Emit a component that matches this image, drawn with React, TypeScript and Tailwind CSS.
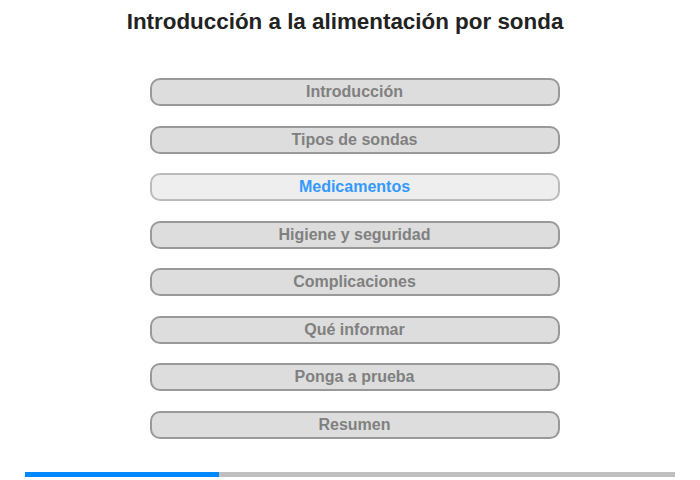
const sections = [
  'Introducción',
  'Tipos de sondas',
  'Medicamentos',
  'Higiene y seguridad',
  'Complicaciones',
  'Qué informar',
  'Ponga a prueba',
  'Resumen',
]

const active = 'Medicamentos'

export default function App() {
  return (
    <div className="w-[700px] h-[480px] bg-white font-[family-name:'Liberation_Sans',Arial,sans-serif] flex flex-col items-center">
      <h1 className="mt-[9px] mr-[10px] text-[22.4px] leading-[26px] font-bold text-[#222]">
        Introducción a la alimentación por sonda
      </h1>

      <div className="mt-[43px] ml-[9px] flex flex-col gap-[19.5px]">
        {sections.map((s) => {
          const isActive = s === active
          return (
            <button
              key={s}
              className={
                isActive
                  ? 'w-[410px] h-[28px] rounded-[10px] border-2 border-[#bbbbbb] bg-[#eeeeee] text-[16px] font-bold text-[#3399ff] leading-none'
                  : 'w-[410px] h-[28px] rounded-[10px] border-2 border-[#999999] bg-[#dddddd] text-[16px] font-bold text-[#808080] leading-none'
              }
            >
              {s}
            </button>
          )
        })}
      </div>

      {/* Progress */}
      <div className="mt-[33px] w-[650px] h-[5px] bg-[#c0c0c0] flex">
        <div className="w-[194px] h-full bg-[#0088ff]" />
      </div>
    </div>
  )
}
